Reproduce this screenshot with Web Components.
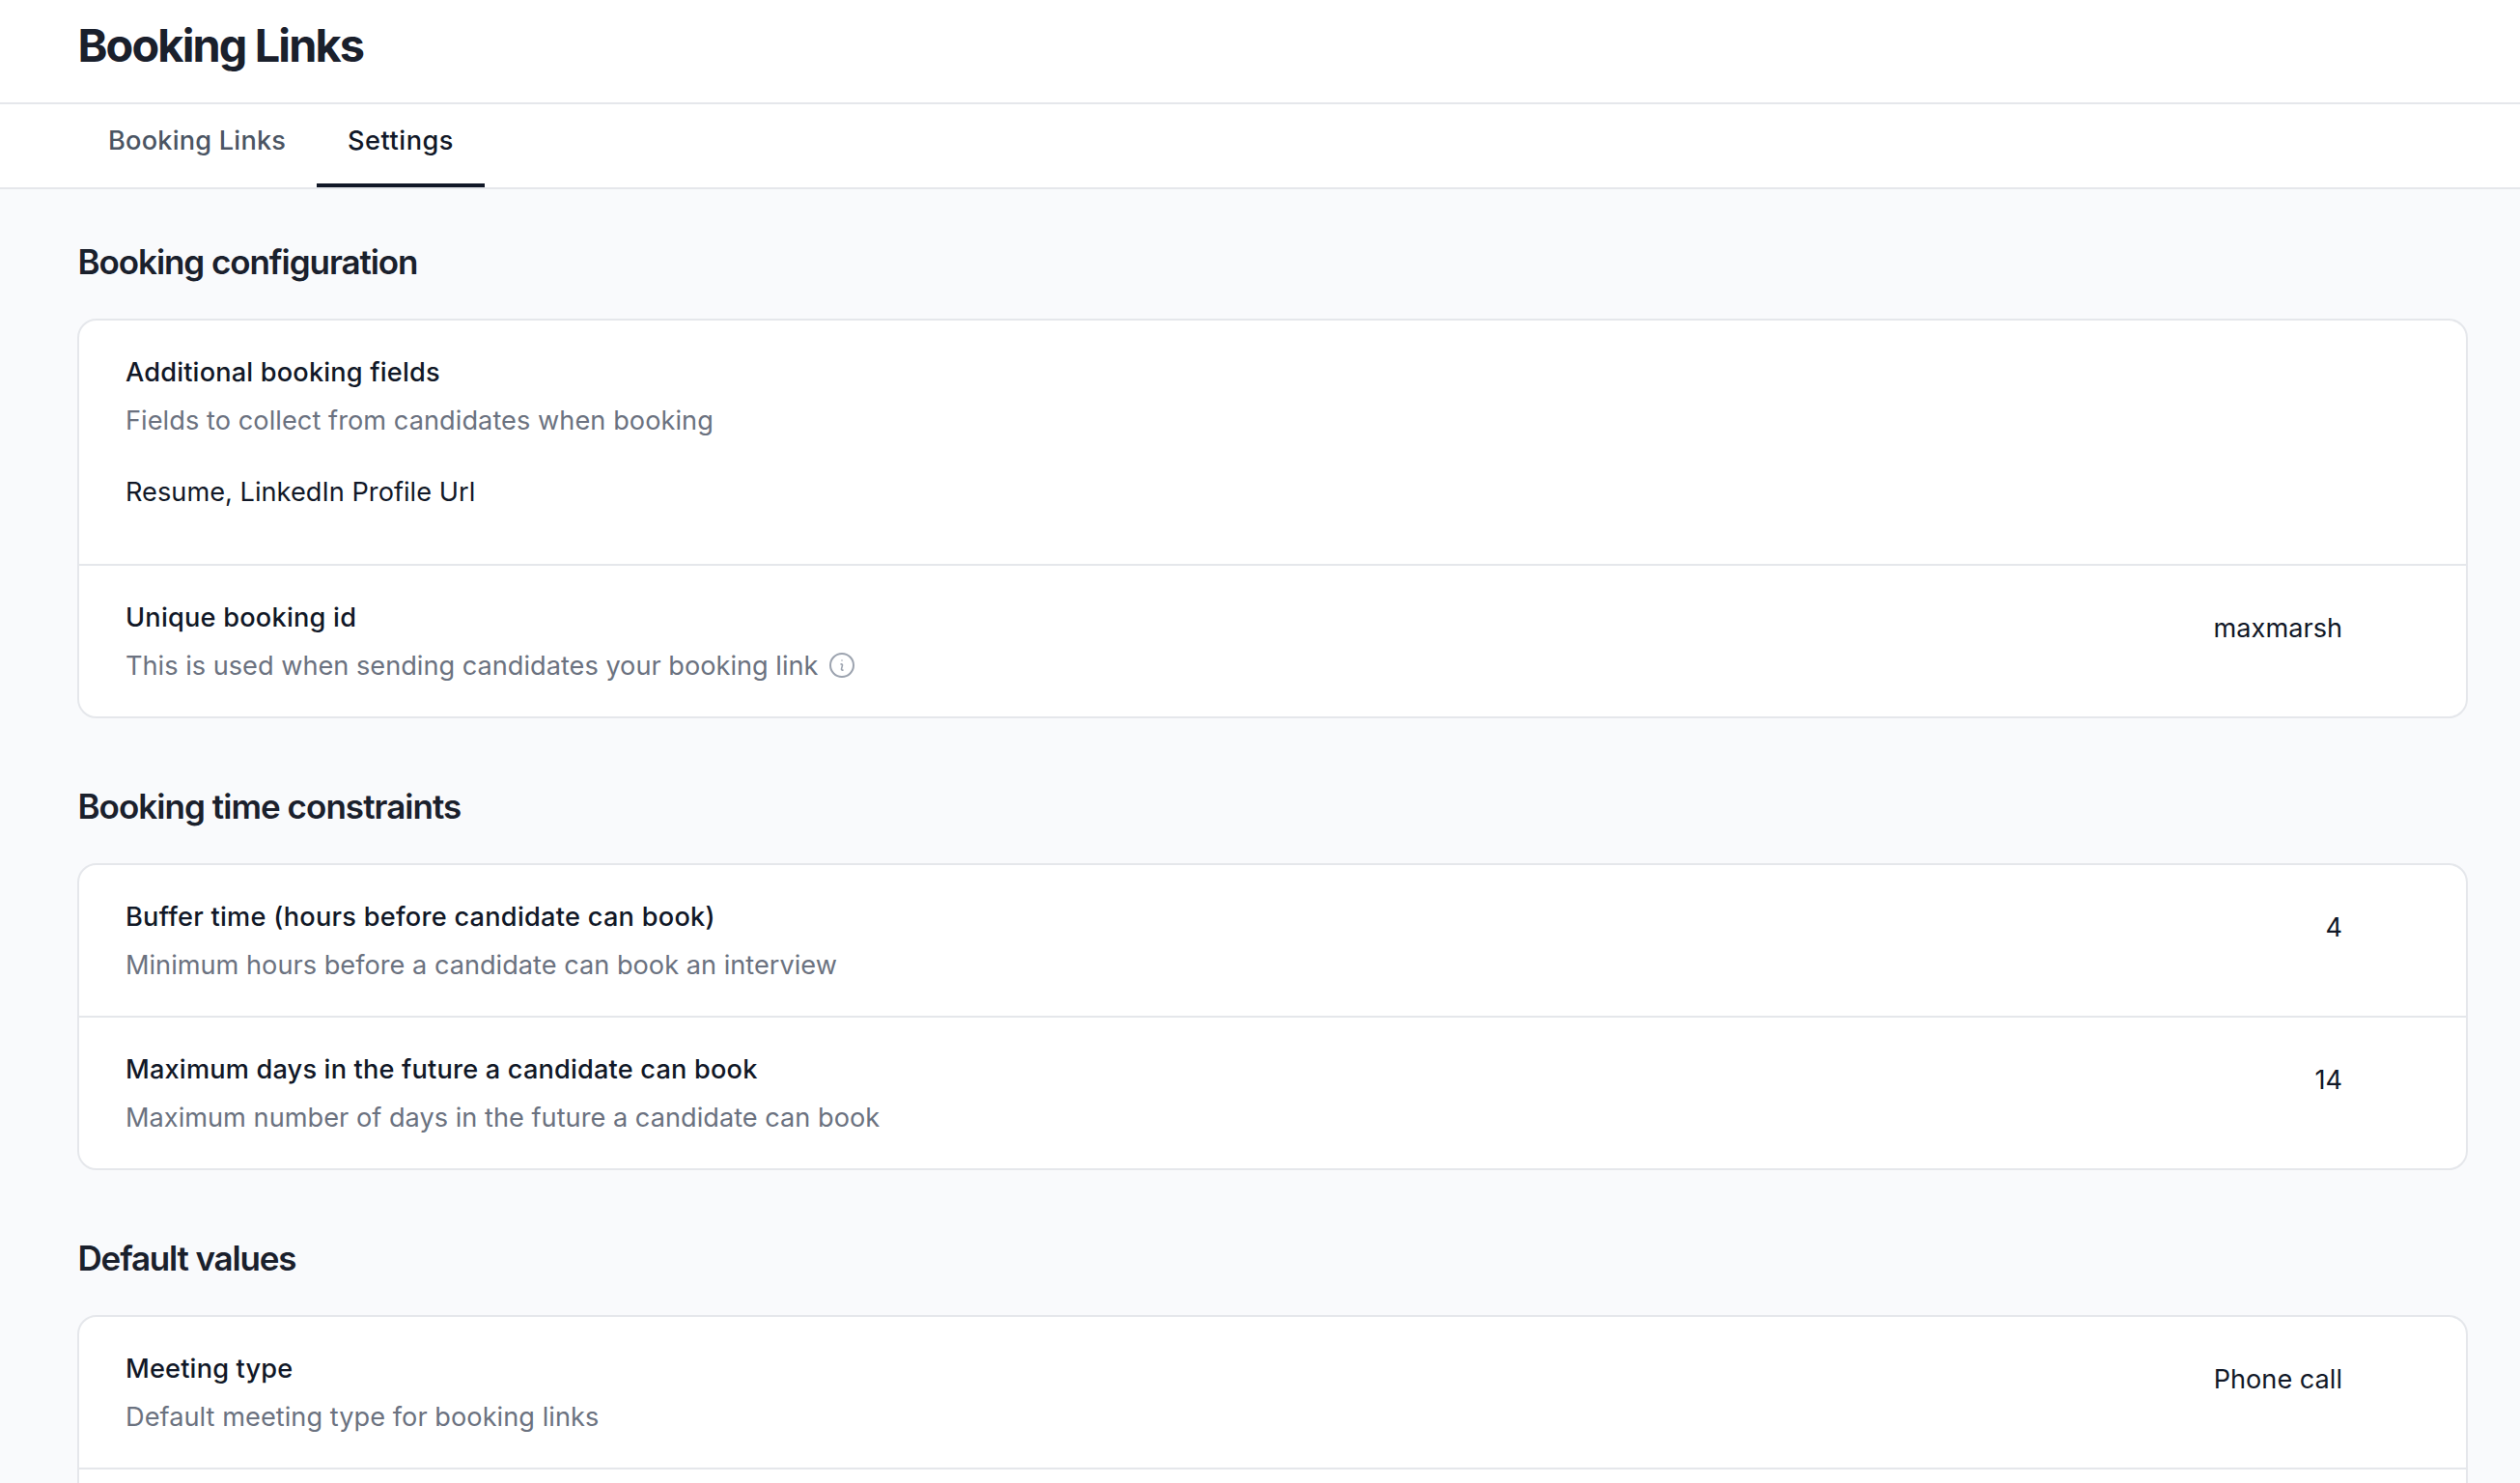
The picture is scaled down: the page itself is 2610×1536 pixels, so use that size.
<!DOCTYPE html>
<html lang="en">
<head>
<meta charset="utf-8">
<title>Booking Links</title>
<style>
  :root {
    --ink: #111827;
    --heading: #1a202c;
    --muted: #6b7280;
    --line: #e5e7eb;
    --page: #f9fafc;
  }
  body {
    margin: 0;
    height: 1536px;
    overflow: hidden;
    background: var(--page);
    color: var(--ink);
    font-family: Inter, "Liberation Sans", sans-serif;
    font-size: 27.15px;
    line-height: 42px;
  }
</style>
</head>
<body>
  <page-header>Booking Links</page-header>
  <tab-bar>
    <tab-item style="--tracking: .22px; --width: 184px">Booking Links</tab-item>
    <tab-item active style="--tracking: .52px; --width: 110px">Settings</tab-item>
  </tab-bar>
  <settings-page>
    <settings-section style="--tracking: -1.06px">
      <span slot="heading">Booking configuration</span>
      <setting-row stacked style="--label: .19px; --hint: .065px; --value: .03px">
        <span slot="label">Additional booking fields</span>
        <span slot="hint">Fields to collect from candidates when booking</span>
        <span>Resume, LinkedIn Profile Url</span>
      </setting-row>
      <setting-row style="--label: .24px; --hint: .01px; --value: 0">
        <span slot="label">Unique booking id</span>
        <span slot="hint">This is used when sending candidates your booking link</span>
        <info-icon slot="icon"></info-icon>
        <span>maxmarsh</span>
      </setting-row>
    </settings-section>
    <settings-section style="--tracking: -.95px">
      <span slot="heading">Booking time constraints</span>
      <setting-row style="--label: .27px; --hint: .015px">
        <span slot="label">Buffer time (hours before candidate can book)</span>
        <span slot="hint">Minimum hours before a candidate can book an interview</span>
        <span>4</span>
      </setting-row>
      <setting-row style="--label: .19px; --hint: .025px">
        <span slot="label">Maximum days in the future a candidate can book</span>
        <span slot="hint">Maximum number of days in the future a candidate can book</span>
        <span>14</span>
      </setting-row>
    </settings-section>
    <settings-section style="--tracking: -1.17px">
      <span slot="heading">Default values</span>
      <setting-row style="--label: .18px; --hint: .05px; --value: 0">
        <span slot="label">Meeting type</span>
        <span slot="hint">Default meeting type for booking links</span>
        <span>Phone call</span>
      </setting-row>
      <setting-row></setting-row>
    </settings-section>
  </settings-page>

<script>
  class BaseElement extends HTMLElement {
    constructor() {
      super();
      this.attachShadow({ mode: 'open' });
    }

    connectedCallback() {
      this.render();
    }

    render() {
      this.shadowRoot.innerHTML = /*html*/ `
        <style>${this.constructor.styles}</style>
        ${this.constructor.markup}
      `;
    }
  }

  class PageHeader extends BaseElement {
    static get styles() {
      return /*css*/ `
        :host {
          display: block;
          box-sizing: border-box;
          height: 108px;
          padding: 19px 80px 0;
          background: #fff;
          border-bottom: 2px solid var(--line);
        }
        h1 {
          margin: 0;
          font-size: 46.8px;
          line-height: 56px;
          font-weight: 700;
          letter-spacing: -1.84px;
          text-indent: .5px;
          color: var(--heading);
        }
      `;
    }

    static get markup() {
      return /*html*/ `<h1><slot></slot></h1>`;
    }
  }

  class TabBar extends BaseElement {
    static get styles() {
      return /*css*/ `
        :host {
          display: flex;
          box-sizing: border-box;
          height: 88px;
          padding: 0 80px;
          background: #fff;
          border-bottom: 2px solid var(--line);
        }
      `;
    }

    static get markup() {
      return /*html*/ `<slot></slot>`;
    }
  }

  class TabItem extends BaseElement {
    static get styles() {
      return /*css*/ `
        :host {
          display: block;
          box-sizing: content-box;
          width: var(--width);
          padding: 17px 32px 0;
          border-bottom: 4px solid transparent;
          font-weight: 500;
          letter-spacing: var(--tracking);
          white-space: nowrap;
          color: #4b5563;
        }
        :host([active]) {
          color: var(--ink);
          border-bottom-color: var(--ink);
        }
      `;
    }

    static get markup() {
      return /*html*/ `<slot></slot>`;
    }
  }

  class SettingsPage extends BaseElement {
    static get styles() {
      return /*css*/ `
        :host {
          display: flex;
          flex-direction: column;
          gap: 69px;
          padding: 53px 54px 0 80px;
        }
      `;
    }

    static get markup() {
      return /*html*/ `<slot></slot>`;
    }
  }

  class SettingsSection extends BaseElement {
    static get styles() {
      return /*css*/ `
        :host {
          display: block;
        }
        h2 {
          margin: 0 0 37px;
          font-size: 35px;
          line-height: 44px;
          font-weight: 600;
          letter-spacing: var(--tracking);
          text-indent: .5px;
          color: var(--heading);
        }
        .card {
          background: #fff;
          border: 2px solid var(--line);
          border-radius: 20px;
        }
        ::slotted(setting-row:not(:last-child)) {
          border-bottom: 2px solid var(--line);
        }
      `;
    }

    static get markup() {
      return /*html*/ `
        <h2><slot name="heading"></slot></h2>
        <div class="card"><slot></slot></div>
      `;
    }
  }

  class SettingRow extends BaseElement {
    static get styles() {
      return /*css*/ `
        :host {
          display: flex;
          justify-content: space-between;
          padding: 33px 48px 31px;
        }
        .text {
          display: grid;
          gap: 8px;
        }
        .label {
          font-weight: 500;
          letter-spacing: var(--label);
        }
        .hint {
          display: flex;
          align-items: center;
          gap: 9px;
          letter-spacing: var(--hint);
          color: var(--muted);
        }
        .value {
          margin: 11px 80px 0 0;
          letter-spacing: var(--value);
        }
        :host([stacked]) {
          flex-direction: column;
          justify-content: flex-start;
          gap: 32px;
          padding-bottom: 53px;
        }
        :host([stacked]) .value {
          margin: 0;
        }
      `;
    }

    static get markup() {
      return /*html*/ `
        <div class="text">
          <div class="label"><slot name="label"></slot></div>
          <div class="hint"><slot name="hint"></slot><slot name="icon"></slot></div>
        </div>
        <div class="value"><slot></slot></div>
      `;
    }
  }

  class InfoIcon extends BaseElement {
    static get styles() {
      return /*css*/ `
        :host {
          display: block;
          width: 32px;
          height: 32px;
          margin-bottom: 2px;
          color: #9ca3af;
        }
        svg {
          display: block;
        }
      `;
    }

    static get markup() {
      return /*html*/ `
        <svg width="32" height="32" viewBox="0 0 24 24" fill="none" stroke="currentColor" stroke-width="1.5" stroke-linecap="round" stroke-linejoin="round">
          <circle cx="12" cy="12" r="9"/>
          <path d="M11.25 11.25l.041-.02a.75.75 0 0 1 1.063.852l-.708 2.836a.75.75 0 0 0 1.063.853l.041-.021M12 8.25h.008v.008H12z" stroke-width="1.2"/>
        </svg>
      `;
    }
  }

  customElements.define('page-header', PageHeader);
  customElements.define('tab-bar', TabBar);
  customElements.define('tab-item', TabItem);
  customElements.define('settings-page', SettingsPage);
  customElements.define('settings-section', SettingsSection);
  customElements.define('setting-row', SettingRow);
  customElements.define('info-icon', InfoIcon);
</script>
</body>
</html>
